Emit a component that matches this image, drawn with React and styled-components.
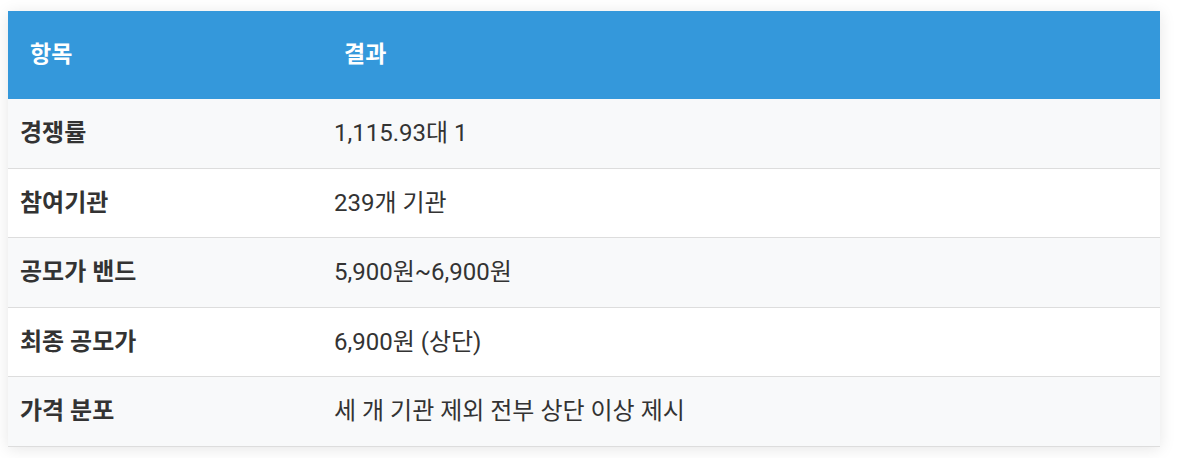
import React from "react";
import styled, { createGlobalStyle } from "styled-components";

const GlobalStyle = createGlobalStyle`
  body {
    margin: 0;
    padding: 11px 8px;
    background: #ffffff;
    font-family: Roboto, "Noto Sans CJK KR", sans-serif;
    color: #333333;
  }
`;

const Table = styled.table`
  width: 1152px;
  border-collapse: separate;
  border-spacing: 0;
  box-shadow: 0 2px 15px rgba(0, 0, 0, 0.1);
  font-size: 24px;
`;

const HeadCell = styled.th`
  background: #3498db;
  color: #ffffff;
  font-size: 23px;
  font-weight: 700;
  text-align: left;
  padding: 26.6px 22px;
  line-height: 34.8px;
  width: ${(props) => props.width || "auto"};
`;

const Row = styled.tr`
  background: ${(props) => (props.striped ? "#f8f9fa" : "#ffffff")};
`;

const Cell = styled.td`
  padding: 17px 12px;
  line-height: 34.6px;
  border-bottom: 1px solid #dddddd;
  font-weight: ${(props) => (props.label ? 700 : 400)};
  color: #333333;
`;

const rows = [
  ["경쟁률", "1,115.93대 1"],
  ["참여기관", "239개 기관"],
  ["공모가 밴드", "5,900원~6,900원"],
  ["최종 공모가", "6,900원 (상단)"],
  ["가격 분포", "세 개 기관 제외 전부 상단 이상 제시"],
];

export default function App() {
  return (
    <>
      <GlobalStyle />
      <Table>
        <thead>
          <tr>
            <HeadCell width="270px">항목</HeadCell>
            <HeadCell>결과</HeadCell>
          </tr>
        </thead>
        <tbody>
          {rows.map(([label, value], i) => (
            <Row key={label} striped={i % 2 === 0}>
              <Cell label>{label}</Cell>
              <Cell>{value}</Cell>
            </Row>
          ))}
        </tbody>
      </Table>
    </>
  );
}
